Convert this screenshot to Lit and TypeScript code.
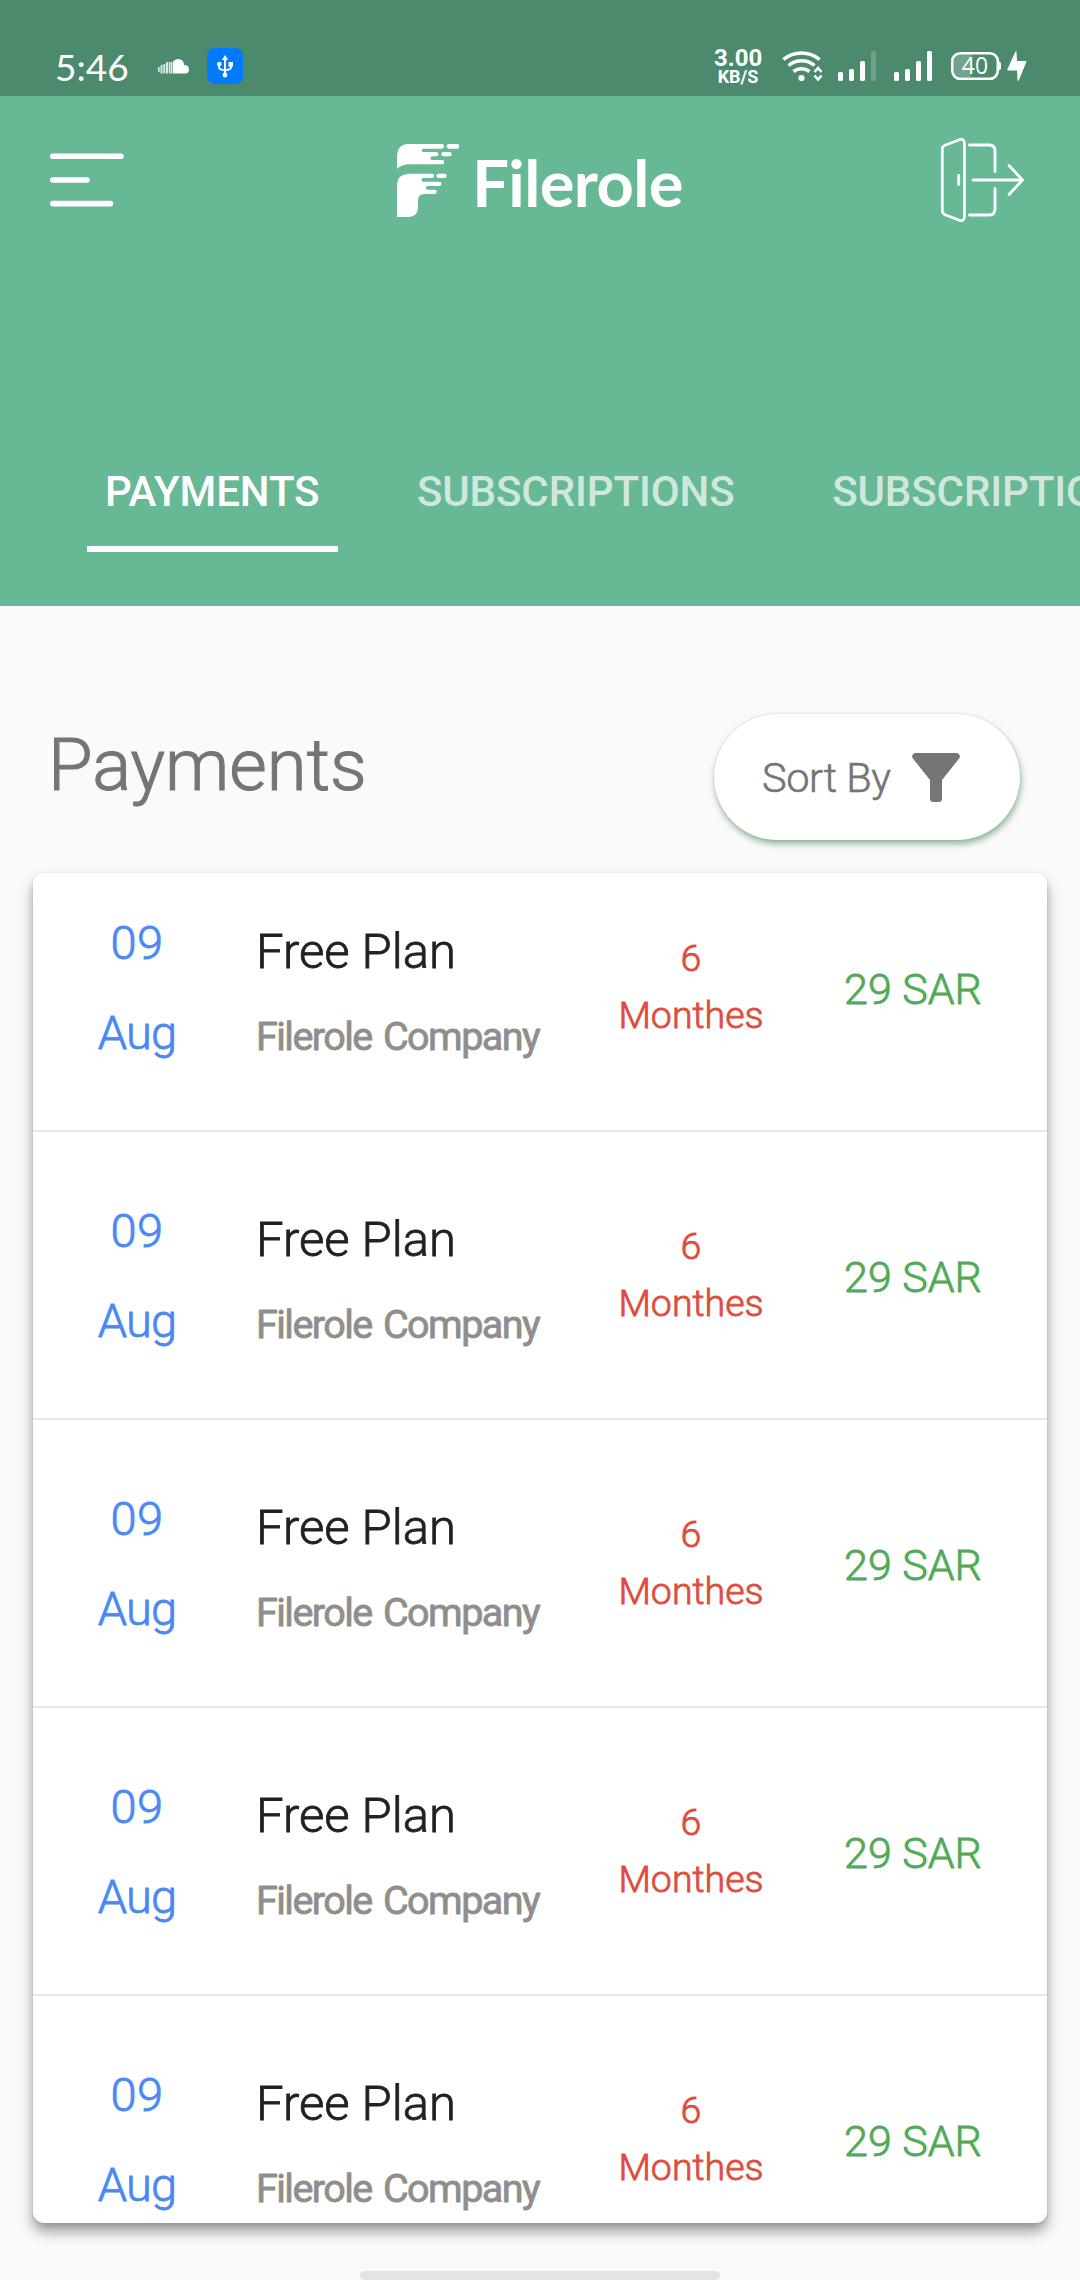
import { LitElement, html, css } from "lit";
import { customElement, property } from "lit/decorators.js";

interface Payment {
  day: string;
  month: string;
  plan: string;
  company: string;
  count: string;
  unit: string;
  price: string;
}

const PAYMENTS: Payment[] = Array.from({ length: 5 }, () => ({
  day: "09",
  month: "Aug",
  plan: "Free Plan",
  company: "Filerole Company",
  count: "6",
  unit: "Monthes",
  price: "29 SAR",
}));

@customElement("status-bar")
class StatusBar extends LitElement {
  static styles = css`
    :host {
      display: flex;
      height: 96px;
      box-sizing: border-box;
      padding: 48px 53px 12px 55px;
      background: #4b8a6c;
      color: #fff;
      align-items: flex-start;
    }
    svg { display: block; flex: none; }
    .time {
      font: 400 37px/38px Lato, sans-serif;
      width: 103px;
      white-space: nowrap;
    }
    .cloud { margin-right: 17px; }
    .spacer { flex: 1; }
    .speed {
      width: 48px;
      margin-right: 20px;
      text-align: center;
      font-family: Roboto, sans-serif;
      font-weight: 700;
      white-space: nowrap;
    }
    .rate { font-size: 24px; line-height: 20px; }
    .unit { font-size: 18px; line-height: 17px; }
    .wifi { margin-right: 14px; }
    .signal { margin-right: 18px; }
    .signal.second { margin-right: 19px; }
    .battery {
      display: grid;
      width: 50px;
      height: 36px;
      margin-right: 6px;
    }
    .battery > * { grid-area: 1 / 1; }
    .level {
      font: 400 23px/34px "Open Sans", sans-serif;
      width: 48px;
      text-align: center;
    }
  `;

  private signal(lastOpacity: number, name: string) {
    return html`<svg class="signal ${name}" width="38" height="36" viewBox="0 0 38 36" fill="#fff">
      <rect x="0" y="24" width="5" height="9" rx="1.5" />
      <rect x="11" y="21" width="5" height="12" rx="1.5" />
      <rect x="22" y="13" width="5" height="20" rx="1.5" />
      <rect x="33" y="3" width="5" height="30" rx="1.5" fill-opacity=${lastOpacity} />
    </svg>`;
  }

  render() {
    return html`
      <div class="time">5:46</div>
      <svg class="cloud" width="32" height="36" viewBox="0 0 32 36" fill="#fff">
        <path d="M15 25.5V13.5Q17 11 20 11q5.500 0 6.200 6Q31 17 31 21.300 31 25.500 27 25.500Z" />
        <g opacity=".8">
          <rect x="0" y="19" width="1.600" height="5" /><rect x="2.500" y="17" width="2" height="8.500" />
          <rect x="5.300" y="16" width="2" height="9.500" /><rect x="8" y="14" width="2" height="11.500" />
          <rect x="10.700" y="14" width="1.800" height="11.500" /><rect x="13" y="14" width="1.500" height="11.500" />
        </g>
      </svg>
      <svg width="36" height="36" viewBox="0 0 36 36">
        <rect width="36" height="36" rx="8" fill="#007bff" />
        <path d="M18 10v17M12 16v3q0 3 6 3q6 0 6-3v-3" fill="none" stroke="#fff" stroke-width="2" />
        <path d="M18 7l3.200 5h-6.400z" fill="#fff" />
        <circle cx="12.300" cy="16" r="2.300" fill="#fff" />
        <rect x="21.500" y="14" width="4.500" height="4.500" fill="#fff" />
        <circle cx="18" cy="27" r="2.400" fill="#fff" />
      </svg>
      <div class="spacer"></div>
      <div class="speed">
        <div class="rate">3.00</div>
        <div class="unit">KB/S</div>
      </div>
      <svg class="wifi" width="42" height="36" viewBox="0 0 42 36" fill="none" stroke="#fff" stroke-width="3.600">
        <path d="M1.500 11.500Q9 5 19.500 5T37.500 11.500" />
        <path d="M6.500 17.500Q12 12.800 19.500 12.800T32.500 17.500" />
        <path d="M11.500 23.500Q15 20.800 19.500 20.800T27.500 23.500" />
        <circle cx="19.500" cy="30" r="3.100" fill="#fff" stroke="none" />
        <path d="M32.500 24l3.500-4 3.500 4M32.500 27.500l3.500 4 3.500-4" stroke-width="2.500" />
      </svg>
      ${this.signal(0.2, "first")} ${this.signal(1, "second")}
      <div class="battery">
        <svg width="50" height="36" viewBox="0 0 50 36">
          <path d="M20 6H10Q3 6 3 13v9q0 7 7 7h10z" fill="#fff" fill-opacity=".22" />
          <rect x="1.300" y="5.200" width="45.500" height="25.600" rx="8" fill="none" stroke="#fff" stroke-width="2.600" />
          <path d="M47.500 13q3 1 3 4.800t-3 4.800z" fill="#fff" />
        </svg>
        <div class="level">40</div>
      </div>
      <svg width="20" height="36" viewBox="0 0 20 36" fill="#fff">
        <path d="M8.500 3.500Q9.500 2.500 9.500 4L10 13H18.500Q20 13 19 14.800L12 32Q11 34 10.500 32L10 22.500H1.500Q0 22.500 .500 21Z" />
      </svg>
    `;
  }
}

@customElement("app-header")
class AppHeader extends LitElement {
  static styles = css`
    :host {
      display: flex;
      flex-direction: column;
      height: 510px;
      background: #67b894;
      color: #fff;
      overflow: hidden;
    }
    .bar {
      display: flex;
      justify-content: space-between;
      padding: 41px 54px 0 50px;
      height: 90px;
    }
    svg { display: block; flex: none; }
    .menu { margin-top: 16px; }
    .brand {
      display: flex;
      align-items: flex-start;
      width: 287px;
      margin-left: 15px;
    }
    .mark { margin-top: 6px; }
    .name {
      font: 700 65px/80px Lato, sans-serif;
      letter-spacing: -0.600px;
      margin-left: 13px;
      margin-top: 5px;
      white-space: nowrap;
    }
    .tabs {
      display: flex;
      margin-top: 229px;
      padding-left: 87px;
      gap: 61px;
      font: 500 42px/50px Roboto, sans-serif;
      letter-spacing: -0.100px;
      white-space: nowrap;
    }
    .tab {
      flex: none;
      padding: 11px 18.500px 29px 18px;
      color: rgba(255, 255, 255, 0.7);
      border-bottom: 6px solid transparent;
    }
    .tab.active {
      color: #fff;
      border-bottom-color: #fff;
    }
  `;

  render() {
    return html`
      <div class="bar">
        <svg class="menu" width="75" height="56" viewBox="0 0 75 56" stroke="#fff" stroke-width="5.600" stroke-linecap="round">
          <path d="M2.800 3.300H71M2.800 27H37M2.800 50.600H60.500" />
        </svg>
        <div class="brand">
          <svg class="mark" width="62.670" height="74.330" viewBox="81 68 188 223" fill="#fff">
            <path d="M81 146V104Q83 73 112 71H215a7 7 0 0 1 0 14H160a5 5 0 0 0 0 10H199a6.500 6.500 0 0 1 0 13H187a5.500 5.500 0 0 0 0 11H216a6.500 6.500 0 0 1 0 13H120Q95 132 81 146Z" />
            <path d="M81 290V192Q83 162 115 160H186a6.500 6.500 0 0 1 0 13H160a5.500 5.500 0 0 0 0 11H208a6.500 6.500 0 0 1 0 13H173a5.500 5.500 0 0 0 0 11H194a6.500 6.500 0 0 1 0 13H165Q144 221 144 240V262Q144 287 118 290Z" />
            <rect x="230" y="71" width="38" height="14" rx="7" />
            <rect x="214" y="95" width="31" height="13" rx="6.500" />
            <rect x="199" y="160" width="31" height="13" rx="6.500" />
          </svg>
          <div class="name">Filerole</div>
        </div>
        <svg width="86" height="87" viewBox="940 137 86 87" fill="none" stroke="#fff" stroke-width="2.800" stroke-linecap="round" stroke-linejoin="round">
          <path d="M942.300 149Q942.300 146.500 945 145.300L959.500 139.700Q964.400 138.500 964.400 143.500V216.500Q964.400 221.500 959.500 220.300L945 214.700Q942.300 213.500 942.300 210.500Z" />
          <path d="M958.700 175.500V184.500" />
          <path d="M969.500 145H989Q995 145 995 151V171.500M995 188.500V209Q995 215 989 215H969.500" />
          <path d="M973 180H1022M1009 165.500L1022.500 180L1009 194.500" />
        </svg>
      </div>
      <div class="tabs">
        <div class="tab active">PAYMENTS</div>
        <div class="tab">SUBSCRIPTIONS</div>
        <div class="tab">SUBSCRIPTIONS</div>
      </div>
    `;
  }
}

@customElement("payment-row")
class PaymentRow extends LitElement {
  @property({ attribute: false }) payment!: Payment;

  static styles = css`
    :host {
      display: grid;
      grid-template-columns: 208px 348px 204px 240px 1fr;
      box-sizing: border-box;
      height: 288px;
      flex: none;
      border-bottom: 2px solid #e8e8e8;
      font-family: Roboto, sans-serif;
      font-weight: 300;
      -webkit-text-stroke: 0.800px currentColor;
      white-space: nowrap;
    }
    .date {
      padding-top: 54px;
      text-align: center;
      font-size: 47px;
      line-height: 90px;
      letter-spacing: -0.800px;
      color: #4a89f3;
    }
    .day { letter-spacing: 0.500px; }
    .details { padding-left: 15px; }
    .plan {
      margin-top: 78px;
      font-size: 49px;
      line-height: 60px;
      color: #212121;
    }
    .company {
      margin-top: 30px;
      font-size: 39.500px;
      line-height: 50px;
      font-weight: 400;
      letter-spacing: -1.550px;
      word-spacing: 3px;
      color: #8e8e8e;
    }
    .term {
      padding-top: 86px;
      text-align: center;
      font-size: 37.500px;
      line-height: 57px;
      color: #e04a3f;
    }
    .price {
      padding-top: 115px;
      text-align: center;
      font-size: 43px;
      line-height: 60px;
      color: #52a956;
    }
  `;

  render() {
    const p = this.payment;
    return html`
      <div class="date"><div class="day">${p.day}</div><div>${p.month}</div></div>
      <div class="details">
        <div class="plan">${p.plan}</div>
        <div class="company">${p.company}</div>
      </div>
      <div class="term"><div>${p.count}</div><div>${p.unit}</div></div>
      <div class="price">${p.price}</div>
    `;
  }
}

@customElement("app-root")
class AppRoot extends LitElement {
  static styles = css`
    :host {
      display: flex;
      flex-direction: column;
      width: 1080px;
      height: 2280px;
      overflow: hidden;
      background: #fafafa;
    }
    .heading {
      display: flex;
      justify-content: space-between;
      align-items: flex-start;
      height: 267px;
      box-sizing: border-box;
      padding: 108px 60px 0 48px;
      font-family: Roboto, sans-serif;
      font-weight: 300;
      -webkit-text-stroke: 0.600px currentColor;
      color: #757575;
    }
    .title {
      margin: 12px 0 0;
      font-size: 72.500px;
      line-height: 80px;
      font-weight: 300;
      letter-spacing: 0;
      -webkit-text-stroke: 1.100px currentColor;
    }
    .sort {
      display: flex;
      align-items: center;
      box-sizing: border-box;
      width: 306px;
      height: 126px;
      padding-left: 48px;
      border-radius: 63px;
      background: #fff;
      box-shadow: 1px 4px 6px rgba(40, 120, 60, 0.500), 0 0 2px rgba(0, 0, 0, 0.150);
      font-size: 41.500px;
      letter-spacing: -0.400px;
    }
    .label { width: 150px; white-space: nowrap; }
    .funnel { display: block; }
    .list {
      display: flex;
      flex-direction: column;
      height: 1350px;
      margin: 0 33px;
      border-radius: 11px;
      background: #fff;
      overflow: hidden;
      box-shadow: 0 9px 14px rgba(0, 0, 0, 0.360), 0 2px 5px rgba(0, 0, 0, 0.120);
    }
    .list payment-row:first-child { margin-top: -29px; }
    .home {
      width: 360px;
      height: 9px;
      margin: 48px auto 0;
      border-radius: 4.500px;
      background: #e4e4e4;
    }
  `;

  render() {
    return html`
      <status-bar></status-bar>
      <app-header></app-header>
      <div class="heading">
        <h1 class="title">Payments</h1>
        <div class="sort">
          <span class="label">Sort By</span>
          <svg class="funnel" width="48" height="49" viewBox="0 0 48 49" fill="#757575">
            <path d="M3 0H45Q49 1.500 47.500 5L30 27V45.500Q30 49 26.500 49H21.500Q18 49 18 45.500V27L.500 5Q-1 1.500 3 0Z" />
          </svg>
        </div>
      </div>
      <div class="list">
        ${PAYMENTS.map((p) => html`<payment-row .payment=${p}></payment-row>`)}
      </div>
      <div class="home"></div>
    `;
  }
}
